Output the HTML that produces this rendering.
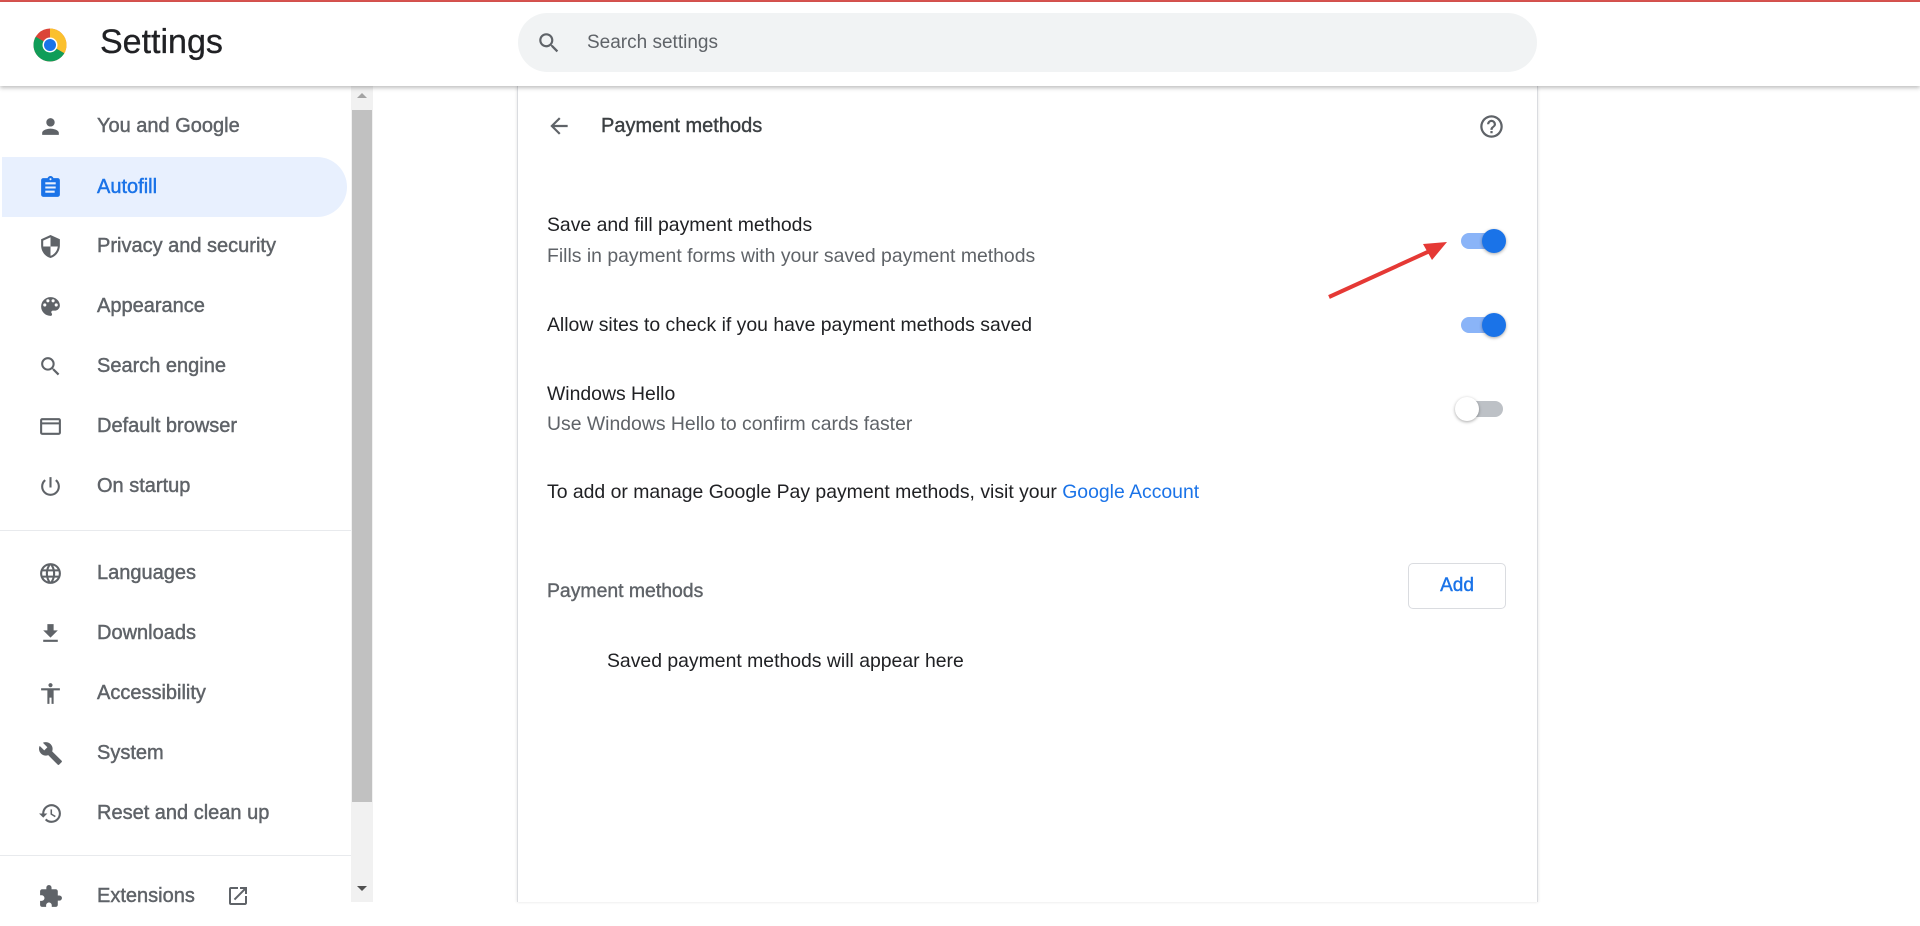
<!DOCTYPE html>
<html><head><meta charset="utf-8"><style>
*{margin:0;padding:0;box-sizing:border-box}
body{width:1920px;height:902px;overflow:hidden;background:#fff;font-family:"Liberation Sans",Arial,sans-serif;position:relative;color:#202124}
.abs{position:absolute}
#top{left:0;top:0;width:1920px;height:2px;background:#d9534f}
#hdr{left:0;top:2px;width:1920px;height:84px;background:#fff;box-shadow:0 2px 4px rgba(0,0,0,.25);z-index:5}
.nav{position:absolute;left:0;width:347px;height:60px;display:flex;align-items:center;font-size:20px;color:#5f6368;-webkit-text-stroke:0.45px #5f6368}
.nav svg{position:absolute;left:38px;width:25px;height:25px;fill:#5f6368}
.nav span{position:absolute;left:97px}
.sel{background:#e8f0fe;border-radius:0 30px 30px 0;color:#1a73e8;-webkit-text-stroke:0.45px #1a73e8;left:2px;width:345px}
.sel svg{fill:#1a73e8;left:36px}
.sel span{left:95px}
.t{position:absolute;font-size:19.4px;color:#202124}
.s{position:absolute;font-size:19.4px;color:#5f6368}
.tog{position:absolute;width:48px;height:26px}
.tog .tr{position:absolute;left:2px;top:5px;width:42px;height:16px;border-radius:8px;background:#8ab4f8}
.tog .kn{position:absolute;right:1px;top:1px;width:24px;height:24px;border-radius:50%;background:#1a73e8;box-shadow:0 1px 3px rgba(0,0,0,.35)}
</style></head><body>
<div id="top" class="abs"></div>
<div id="hdr" class="abs">
 <svg class="abs" style="left:32px;top:25px" width="36" height="36" viewBox="0 0 48 48">
  <circle cx="24" cy="24" r="22" fill="#db4437"/>
  <path d="M24 24 L24 2 A22 22 0 0 1 43.05 35 Z" fill="#fbc02d"/>
  <path d="M24 24 L43.05 35 A22 22 0 0 1 4.95 35 Z" fill="#0f9d58"/>
  <path d="M24 24 L4.95 35 A22 22 0 0 1 4.95 13 Z" fill="#0f9d58"/>
  <circle cx="24" cy="24" r="10" fill="#fff"/><circle cx="24" cy="24" r="8" fill="#1a73e8"/>
 </svg>
 <div class="abs" style="left:100px;top:21px;font-size:34px;color:#202124;-webkit-text-stroke:0.3px #202124">Settings</div>
 <div class="abs" style="left:518px;top:11px;width:1019px;height:59px;border-radius:30px;background:#f1f3f4">
  <svg class="abs" style="left:18px;top:17px" width="26" height="26" viewBox="0 0 24 24"><path fill="#5f6368" d="M15.5 14h-.79l-.28-.27A6.47 6.47 0 0 0 16 9.5 6.5 6.5 0 1 0 9.5 16c1.61 0 3.09-.59 4.23-1.57l.27.28v.79l5 4.99L20.49 19l-4.99-5zm-6 0C7.01 14 5 11.99 5 9.5S7.01 5 9.5 5 14 7.01 14 9.5 11.99 14 9.5 14z"/></svg>
  <div class="abs" style="left:69px;top:19px;font-size:19px;color:#5f6368">Search settings</div>
 </div>
</div>

<div class="nav" style="top:96px"><svg viewBox="0 0 24 24"><path d="M12 12c2.21 0 4-1.79 4-4s-1.79-4-4-4-4 1.79-4 4 1.79 4 4 4zm0 2c-2.67 0-8 1.34-8 4v2h16v-2c0-2.66-5.33-4-8-4z"/></svg><span>You and Google</span></div>
<div class="nav sel" style="top:157px"><svg viewBox="0 0 24 24"><path d="M19 3h-4.18C14.4 1.84 13.3 1 12 1s-2.4.84-2.82 2H5c-1.1 0-2 .9-2 2v14c0 1.1.9 2 2 2h14c1.1 0 2-.9 2-2V5c0-1.1-.9-2-2-2zm-7 0c.55 0 1 .45 1 1s-.45 1-1 1-1-.45-1-1 .45-1 1-1zm4 14H7v-2h9v2zm1-4H7v-2h10v2zm0-4H7V7h10v2z"/></svg><span>Autofill</span></div>
<div class="nav" style="top:216px"><svg viewBox="0 0 24 24"><path d="M12 1L3 5v6c0 5.55 3.84 10.74 9 12 5.16-1.26 9-6.45 9-12V5l-9-4zm0 10.99h7c-.53 4.12-3.28 7.790-7 8.94V12H5V6.3l7-3.11v8.8z"/></svg><span>Privacy and security</span></div>
<div class="nav" style="top:276px"><svg viewBox="0 0 24 24"><path d="M12 3a9 9 0 0 0 0 18c.83 0 1.5-.67 1.5-1.5 0-.39-.15-.74-.39-1.010-.23-.26-.38-.61-.38-.99 0-.83.67-1.5 1.5-1.5H16c2.76 0 5-2.24 5-5 0-4.42-4.03-8-9-8zm-5.5 9a1.5 1.5 0 1 1 0-3 1.5 1.5 0 0 1 0 3zm3-4a1.5 1.5 0 1 1 0-3 1.5 1.5 0 0 1 0 3zm5 0a1.5 1.5 0 1 1 0-3 1.5 1.5 0 0 1 0 3zm3 4a1.5 1.5 0 1 1 0-3 1.5 1.5 0 0 1 0 3z"/></svg><span>Appearance</span></div>
<div class="nav" style="top:336px"><svg viewBox="0 0 24 24"><path d="M15.5 14h-.79l-.28-.27A6.47 6.47 0 0 0 16 9.5 6.5 6.5 0 1 0 9.5 16c1.61 0 3.09-.59 4.230-1.57l.27.28v.79l5 4.99L20.49 19l-4.99-5zm-6 0C7.01 14 5 11.99 5 9.5S7.01 5 9.5 5 14 7.01 14 9.5 11.99 14 9.5 14z"/></svg><span>Search engine</span></div>
<div class="nav" style="top:396px"><svg viewBox="0 0 24 24"><path d="M20 4H4c-1.1 0-2 .9-2 2v12c0 1.1.9 2 2 2h16c1.1 0 2-.9 2-2V6c0-1.1-.9-2-2-2zm0 14H4v-8h16v8zm0-10H4V6h16v2z"/></svg><span>Default browser</span></div>
<div class="nav" style="top:456px"><svg viewBox="0 0 24 24"><path d="M13 3h-2v10h2V3zm4.83 2.17l-1.42 1.42A6.92 6.92 0 0 1 19 12c0 3.87-3.13 7-7 7s-7-3.13-7-7c0-2.19 1.01-4.14 2.58-5.42L6.17 5.17A8.93 8.93 0 0 0 3 12a9 9 0 0 0 18 0c0-2.74-1.23-5.18-3.17-6.83z"/></svg><span>On startup</span></div>
<div class="abs" style="left:0;top:530px;width:351px;height:1px;background:#e8eaed"></div>
<div class="nav" style="top:543px"><svg viewBox="0 0 24 24"><path d="M12 2a10 10 0 1 0 0 20 10 10 0 0 0 0-20zm6.93 6h-2.95a15.6 15.6 0 0 0-1.38-3.56A8.03 8.03 0 0 1 18.93 8zM12 4.04c.83 1.2 1.48 2.53 1.91 3.96h-3.82c.43-1.43 1.08-2.76 1.91-3.96zM4.26 14a8.2 8.2 0 0 1 0-4h3.38a16.5 16.5 0 0 0 0 4H4.26zm.82 2h2.95c.32 1.25.78 2.45 1.38 3.56A7.99 7.99 0 0 1 5.08 16zm2.95-8H5.08a7.99 7.99 0 0 1 4.33-3.56A15.6 15.6 0 0 0 8.03 8zM12 19.96c-.83-1.2-1.48-2.53-1.91-3.96h3.820c-.43 1.43-1.08 2.76-1.91 3.96zM14.34 14H9.66a14.7 14.7 0 0 1 0-4h4.68a14.7 14.7 0 0 1 0 4zm.25 5.56c.6-1.11 1.06-2.31 1.38-3.56h2.95a8.03 8.03 0 0 1-4.33 3.56zM16.36 14a16.5 16.5 0 0 0 0-4h3.38a8.2 8.2 0 0 1 0 4h-3.38z"/></svg><span>Languages</span></div>
<div class="nav" style="top:603px"><svg viewBox="0 0 24 24"><path d="M19 9h-4V3H9v6H5l7 7 7-7zM5 18v2h14v-2H5z"/></svg><span>Downloads</span></div>
<div class="nav" style="top:663px"><svg viewBox="0 0 24 24"><path d="M12 2a2 2 0 1 1 0 4 2 2 0 0 1 0-4zm9 7h-6v13h-2v-6h-2v6H9V9H3V7h18v2z"/></svg><span>Accessibility</span></div>
<div class="nav" style="top:723px"><svg viewBox="0 0 24 24"><path d="M22.7 19l-9.1-9.1c.9-2.3.4-5-1.5-6.9-2-2-5-2.4-7.4-1.3L9 6 6 9 1.6 4.7C.4 7.1.9 10.1 2.9 12.1c1.9 1.9 4.6 2.4 6.9 1.5l9.1 9.1c.4.4 1 .4 1.4 0l2.3-2.3c.5-.4.5-1.1.1-1.4z"/></svg><span>System</span></div>
<div class="nav" style="top:783px"><svg viewBox="0 0 24 24"><path d="M13 3a9 9 0 0 0-9 9H1l3.89 3.89.07.14L9 12H6c0-3.87 3.13-7 7-7s7 3.13 7 7-3.13 7-7 7c-1.93 0-3.68-.79-4.94-2.06l-1.42 1.42A8.95 8.95 0 0 0 13 21a9 9 0 0 0 0-18zm-1 5v5l4.28 2.54.72-1.21-3.5-2.08V8H12z"/></svg><span>Reset and clean up</span></div>
<div class="abs" style="left:0;top:855px;width:351px;height:1px;background:#e8eaed"></div>
<div class="nav" style="top:866px"><svg viewBox="0 0 24 24"><path d="M20.5 11H19V7c0-1.1-.9-2-2-2h-4V3.5a2.5 2.5 0 0 0-5 0V5H4c-1.1 0-2 .9-2 2v3.8h1.5c1.49 0 2.7 1.21 2.7 2.7s-1.21 2.7-2.7 2.7H2V20c0 1.1.9 2 2 2h3.8v-1.5c0-1.49 1.21-2.7 2.7-2.7s2.7 1.21 2.7 2.7V22H17c1.1 0 2-.9 2-2v-4h1.5a2.5 2.5 0 0 0 0-5z"/></svg><span>Extensions</span>
 <svg style="left:226px;width:24px;height:24px" viewBox="0 0 24 24"><path d="M19 19H5V5h7V3H5a2 2 0 0 0-2 2v14a2 2 0 0 0 2 2h14c1.1 0 2-.9 2-2v-7h-2v7zM14 3v2h3.59l-9.83 9.83 1.41 1.41L19 6.41V10h2V3h-7z"/></svg></div>

<div class="abs" style="left:351px;top:86px;width:22px;height:816px;background:#f1f1f1"></div>
<div class="abs" style="left:352px;top:110px;width:20px;height:692px;background:#c1c1c1"></div>
<div class="abs" style="left:357px;top:93px;width:0;height:0;border-left:5px solid transparent;border-right:5px solid transparent;border-bottom:5px solid #a3a3a3"></div>
<div class="abs" style="left:357px;top:886px;width:0;height:0;border-left:5px solid transparent;border-right:5px solid transparent;border-top:5px solid #505050"></div>

<div class="abs" style="left:517px;top:86px;width:1021px;height:816px;background:#fff;border-left:1px solid #dadce0;border-right:1px solid #dadce0;box-shadow:0 0 3px rgba(0,0,0,.12)"></div>
<svg class="abs" style="left:546px;top:113px" width="26" height="26" viewBox="0 0 24 24"><path fill="#5f6368" d="M20 11H7.83l5.59-5.59L12 4l-8 8 8 8 1.41-1.41L7.83 13H20v-2z"/></svg>
<div class="abs" style="left:601px;top:115px;font-size:20px;color:#3c4043;-webkit-text-stroke:0.4px #3c4043">Payment methods</div>
<svg class="abs" style="left:1478px;top:113px" width="27" height="27" viewBox="0 0 24 24"><path fill="#5f6368" d="M11 18h2v-2h-2v2zm1-16a10 10 0 1 0 0 20 10 10 0 0 0 0-20zm0 18c-4.41 0-8-3.59-8-8s3.59-8 8-8 8 3.59 8 8-3.59 8-8 8zm0-14a4 4 0 0 0-4 4h2c0-1.1.9-2 2-2s2 .9 2 2c0 2-3 1.75-3 5h2c0-2.25 3-2.5 3-5a4 4 0 0 0-4-4z"/></svg>

<div class="t" style="left:547px;top:214px">Save and fill payment methods</div>
<div class="s" style="left:547px;top:245px">Fills in payment forms with your saved payment methods</div>
<div class="tog" style="left:1459px;top:228px"><div class="tr"></div><div class="kn"></div></div>

<div class="t" style="left:547px;top:314px">Allow sites to check if you have payment methods saved</div>
<div class="tog" style="left:1459px;top:312px"><div class="tr"></div><div class="kn"></div></div>

<div class="t" style="left:547px;top:383px">Windows Hello</div>
<div class="s" style="left:547px;top:413px">Use Windows Hello to confirm cards faster</div>
<div class="tog" style="left:1455px;top:396px"><div class="tr" style="left:6px;background:#bdc1c6"></div><div class="kn" style="left:0;right:auto;background:#fff"></div></div>

<div class="t" style="left:547px;top:481px">To add or manage Google Pay payment methods, visit your <span style="color:#1a73e8">Google Account</span></div>

<div class="abs" style="left:547px;top:580px;font-size:19.4px;color:#5f6368;-webkit-text-stroke:0.4px #5f6368">Payment methods</div>
<div class="abs" style="left:1408px;top:563px;width:98px;height:46px;border:1px solid #dadce0;border-radius:5px;color:#1a73e8;font-size:19px;-webkit-text-stroke:0.4px #1a73e8;text-align:center;line-height:44px">Add</div>
<div class="t" style="left:607px;top:650px">Saved payment methods will appear here</div>

<svg class="abs" style="left:1320px;top:230px" width="140" height="80" viewBox="0 0 140 80">
 <line x1="9" y1="67" x2="112" y2="20" stroke="#e53935" stroke-width="4"/>
 <path d="M127 12 L103 14 L112 30 Z" fill="#e53935"/>
</svg>
</body></html>
